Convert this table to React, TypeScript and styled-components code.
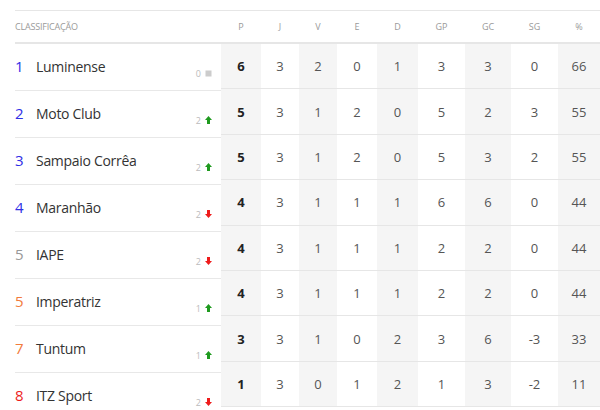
import { FC } from 'react'
import styled, { createGlobalStyle } from 'styled-components'

type Trend = 'up' | 'down' | 'same'

interface TeamRow {
  pos: number
  posColor: string
  name: string
  diff: number
  trend: Trend
  stats: number[]
}

const BLUE = '#2f2fe6'
const GREY = '#999999'
const ORANGE = '#f27b3c'
const RED = '#ee1c1c'

const rows: TeamRow[] = [
  { pos: 1, posColor: BLUE, name: 'Luminense', diff: 0, trend: 'same', stats: [6, 3, 2, 0, 1, 3, 3, 0, 66] },
  { pos: 2, posColor: BLUE, name: 'Moto Club', diff: 2, trend: 'up', stats: [5, 3, 1, 2, 0, 5, 2, 3, 55] },
  { pos: 3, posColor: BLUE, name: 'Sampaio Corrêa', diff: 2, trend: 'up', stats: [5, 3, 1, 2, 0, 5, 3, 2, 55] },
  { pos: 4, posColor: BLUE, name: 'Maranhão', diff: 2, trend: 'down', stats: [4, 3, 1, 1, 1, 6, 6, 0, 44] },
  { pos: 5, posColor: GREY, name: 'IAPE', diff: 2, trend: 'down', stats: [4, 3, 1, 1, 1, 2, 2, 0, 44] },
  { pos: 5, posColor: ORANGE, name: 'Imperatriz', diff: 1, trend: 'up', stats: [4, 3, 1, 1, 1, 2, 2, 0, 44] },
  { pos: 7, posColor: ORANGE, name: 'Tuntum', diff: 1, trend: 'up', stats: [3, 3, 1, 0, 2, 3, 6, -3, 33] },
  { pos: 8, posColor: RED, name: 'ITZ Sport', diff: 2, trend: 'down', stats: [1, 3, 0, 1, 2, 1, 3, -2, 11] },
]

const columns = ['P', 'J', 'V', 'E', 'D', 'GP', 'GC', 'SG', '%']

const GlobalStyle = createGlobalStyle`
  html, body {
    margin: 0;
    padding: 0;
    background: #ffffff;
    font-family: 'Open Sans', 'Liberation Sans', sans-serif;
  }
`

const TrendIcon: FC<{ trend: Trend }> = ({ trend }) => {
  if (trend === 'same') {
    return (
      <svg width="7" height="7" viewBox="0 0 7 7">
        <rect x="0.5" y="0.5" width="6" height="6" fill="#cccccc" />
      </svg>
    )
  }
  const up = trend === 'up'
  return (
    <svg width="7" height="8" viewBox="0 0 7 8" style={{ transform: up ? undefined : 'rotate(180deg)' }}>
      <path d="M3.5 0 L7 4 L5 4 L5 8 L2 8 L2 4 L0 4 Z" fill={up ? '#1f9a1f' : '#ee1c1c'} />
    </svg>
  )
}

const StandingsTable: FC = () => {
  return (
    <Wrapper>
      <Board>
        <Classification>
          <HeaderCell>Classificação</HeaderCell>
          {rows.map((row) => (
            <TeamItem key={row.name}>
              <Position $color={row.posColor}>{row.pos}</Position>
              <TeamName>{row.name}</TeamName>
              <Variation>
                <span>{row.diff}</span>
                <TrendIcon trend={row.trend} />
              </Variation>
            </TeamItem>
          ))}
        </Classification>

        <StatsGrid>
          {columns.map((col) => (
            <StatHead key={col}>{col}</StatHead>
          ))}
          {rows.map((row) =>
            row.stats.map((value, i) => (
              <StatCell key={`${row.name}-${i}`} $shaded={i % 2 === 0} $bold={i === 0}>
                {value}
              </StatCell>
            ))
          )}
        </StatsGrid>
      </Board>
    </Wrapper>
  )
}

const Wrapper = styled.div`
  width: 600px;
  height: 410px;
  overflow: hidden;
  padding: 10px 0 0 15px;
  box-sizing: border-box;
`

const Board = styled.div`
  display: flex;
  border-top: 1px solid #e6e6e6;
`

const Classification = styled.div`
  width: 206px;
  flex-shrink: 0;
  display: flex;
  flex-direction: column;
`

const HeaderCell = styled.div`
  height: 31px;
  display: flex;
  align-items: center;
  border-bottom: 2px solid #e6e6e6;
  font-size: 9px;
  text-transform: uppercase;
  color: #9a9a9a;
  letter-spacing: -0.2px;
`

const TeamItem = styled.div`
  height: 46px;
  border-bottom: 1px solid #e8e8e8;
  display: flex;
  align-items: center;
  padding-bottom: 2px;
  box-sizing: content-box;
  height: 44px;
`

const Position = styled.span<{ $color: string }>`
  width: 21px;
  font-size: 15px;
  color: ${(p) => p.$color};
`

const TeamName = styled.span`
  flex: 1;
  font-size: 14px;
  color: #333333;
  letter-spacing: -0.3px;
`

const Variation = styled.span`
  display: flex;
  align-items: center;
  gap: 4px;
  padding: 14px 9px 0 0;
  font-size: 9px;
  color: #bbbbbb;
`

const StatsGrid = styled.div`
  flex: 1;
  display: grid;
  grid-template-columns: 40px 38px 38px 40px 41px 47px 46px 47px 1fr;
  grid-auto-rows: 45.4px;
  grid-template-rows: 33px;
`

const StatHead = styled.div`
  display: flex;
  align-items: center;
  justify-content: center;
  border-bottom: 2px solid #e6e6e6;
  font-size: 9px;
  color: #9a9a9a;
`

const StatCell = styled.div<{ $shaded: boolean; $bold: boolean }>`
  display: flex;
  align-items: center;
  justify-content: center;
  border-bottom: 1px solid #e6e6e6;
  background: ${(p) => (p.$shaded ? '#f5f5f5' : '#ffffff')};
  font-size: 13px;
  font-weight: ${(p) => (p.$bold ? 700 : 400)};
  color: ${(p) => (p.$bold ? '#222222' : '#555555')};
`

const App: FC = () => (
  <>
    <GlobalStyle />
    <StandingsTable />
  </>
)

export default App
